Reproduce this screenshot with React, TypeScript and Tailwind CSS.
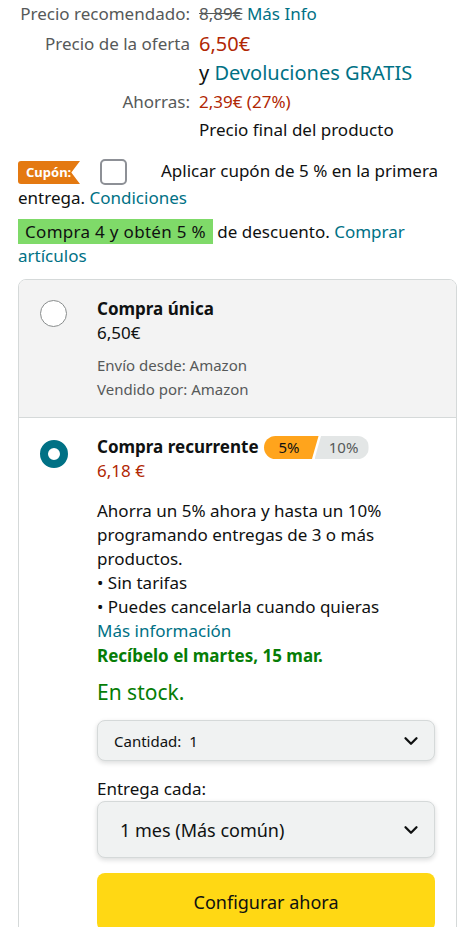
import { ChevronDown } from "lucide-react";

const font = { fontFamily: '"Noto Sans", "Open Sans", sans-serif' };

function PriceRow({ label, children }: { label: string; children: React.ReactNode }) {
  return (
    <div className="grid grid-cols-[172px_1fr] gap-x-[9px]">
      <div className="text-right text-[#565959]">{label}</div>
      <div>{children}</div>
    </div>
  );
}

function Select({ label, big }: { label: string; big?: boolean }) {
  return (
    <div
      className={`flex items-center justify-between rounded-[8px] border border-[#d5d9d9] bg-[#f0f2f2] shadow-[0_2px_5px_rgba(15,17,17,0.15)] ${
        big ? "h-[57px] pl-[22px] pr-[12px] text-[18px]" : "h-[41px] pl-[16px] pr-[12px] text-[15px]"
      }`}
    >
      <span className="whitespace-pre">{label}</span>
      <ChevronDown className="h-[22px] w-[22px]" strokeWidth={2.5} />
    </div>
  );
}

export default function App() {
  return (
    <div style={font} className="w-[475px] bg-white text-[17px] leading-[24px] text-[#0f1111]">
      <div className="px-[18px] pt-[2px]">
        {/* prices */}
        <div className="flex flex-col">
          <PriceRow label="Precio recomendado:">
            <span className="text-[#565959] line-through">8,89€</span>{" "}
            <span className="text-[#007185]">Más Info</span>
          </PriceRow>
          <div className="mt-[6px]">
            <PriceRow label="Precio de la oferta">
              <div className="text-[20px] leading-[24px] text-[#b12704]">6,50€</div>
              <div className="mt-[4px] text-[20px] leading-[26px]">
                y <span className="text-[#007185]">Devoluciones GRATIS</span>
              </div>
            </PriceRow>
          </div>
          <div className="mt-[4px]">
            <PriceRow label="Ahorras:">
              <span className="text-[#b12704]">2,39€ (27%)</span>
            </PriceRow>
          </div>
          <div className="mt-[4px]">
            <PriceRow label="">
              <span>Precio final del producto</span>
            </PriceRow>
          </div>
        </div>

        {/* coupon */}
        <div className="mt-[16px] leading-[25px]">
          <span className="inline-flex h-[23px] w-[62px] items-center rounded-l-[3px] bg-[#e47911] pl-[8px] align-middle text-[13px] font-bold text-white [clip-path:polygon(0_0,100%_0,86%_50%,100%_100%,0_100%)]">
            Cupón:
          </span>
          <span className="ml-[20px] inline-block h-[26px] w-[27px] rounded-[5px] border-2 border-[#8d9096] bg-white align-middle" />
          <span className="ml-[34px]">Aplicar cupón de 5 % en la primera entrega. </span>
          <span className="text-[#007185]">Condiciones</span>
        </div>

        {/* promo */}
        <div className="mt-[10px] leading-[24px]">
          <span className="bg-[#7fda69] px-[7px] py-[1px] tracking-[0.3px]">Compra 4 y obtén 5 %</span>{" "}
          <span>de descuento. </span>
          <span className="text-[#007185]">Comprar artículos</span>
        </div>

        {/* card */}
        <div className="mt-[11px] overflow-hidden rounded-t-[8px] border border-[#d5d9d9]">
          <div className="flex border-b border-[#d5d9d9] bg-[#f3f3f3] pb-[16px] pl-[21px] pt-[17px]">
            <div className="mt-[3px] h-[27px] w-[27px] shrink-0 rounded-full border border-[#888c8c] bg-white" />
            <div className="ml-[30px]">
              <div className="font-bold">Compra única</div>
              <div>6,50€</div>
              <div className="mt-[8px] text-[15px] leading-[24px] text-[#565959]">
                <div>Envío desde: Amazon</div>
                <div>Vendido por: Amazon</div>
              </div>
            </div>
          </div>

          <div className="flex pl-[21px] pr-[21px] pt-[17px]">
            <div className="mt-[5px] h-[28px] w-[28px] shrink-0 rounded-full border-[8px] border-[#007185] bg-white" />
            <div className="ml-[29px] flex-1">
              <div className="flex items-center">
                <span className="font-bold">Compra recurrente</span>
                <span className="ml-[5px] flex h-[23px] items-center text-[15px]">
                  <span className="flex h-full w-[55px] items-center justify-center rounded-l-full bg-[#ffa41c] pr-[4px] [clip-path:polygon(0_0,100%_0,88%_100%,0_100%)]">
                    5%
                  </span>
                  <span className="-ml-[4px] flex h-full w-[54px] items-center justify-center rounded-r-full bg-[#e3e6e6] pl-[4px] text-[#565959] [clip-path:polygon(12%_0,100%_0,100%_100%,0_100%)]">
                    10%
                  </span>
                </span>
              </div>
              <div className="text-[#b12704]">6,18 €</div>
              <div className="mt-[16px]">
                Ahorra un 5% ahora y hasta un 10% programando entregas de 3 o más productos.
              </div>
              <div>• Sin tarifas</div>
              <div>• Puedes cancelarla cuando quieras</div>
              <div className="text-[#007185]">Más información</div>
              <div className="mt-[1px] font-bold text-[#067d06]">Recíbelo el martes, 15 mar.</div>
              <div className="mt-[10px] text-[21px] leading-[28px] text-[#067d06]">En stock.</div>
              <div className="mt-[14px]">
                <Select label="Cantidad:  1" />
              </div>
              <div className="mt-[16px]">Entrega cada:</div>
              <div className="mt-[0px]">
                <Select label="1 mes (Más común)" big />
              </div>
              <button className="mt-[15px] flex h-[58px] w-full items-center justify-center rounded-[8px] bg-[#ffd814] text-[18px]">
                Configurar ahora
              </button>
            </div>
          </div>
        </div>
      </div>
    </div>
  );
}
